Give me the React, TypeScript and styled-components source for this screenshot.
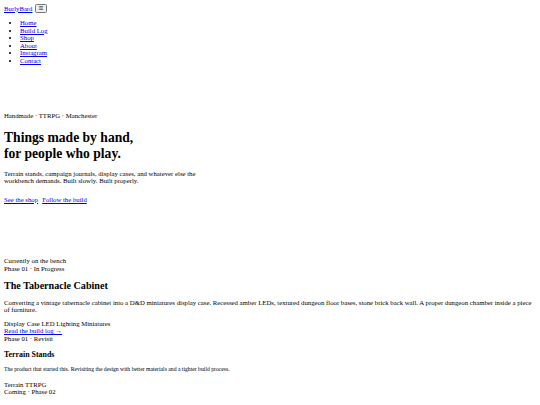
import React from "react";
import styled, { createGlobalStyle } from "styled-components";

const Global = createGlobalStyle`
  html, body { margin: 0; padding: 0; background: #fff; }
  body {
    padding: 4px 4px;
    font-family: "Liberation Serif", "Times New Roman", serif;
    font-size: 6.75px;
    line-height: 7.55px;
    color: #000;
  }
  a { color: #0000ee; }
`;

const Header = styled.header`
  display: block;
`;

const Bar = styled.div`
  display: flex;
  align-items: center;
  gap: 2px;
`;

const Logo = styled.a`
  font-size: 6.75px;
`;

const MenuButton = styled.button`
  font-family: "DejaVu Sans", sans-serif;
  font-size: 5.5px;
  line-height: 1;
  padding: 1px 3px;
  height: 9px;
  border: 1px solid #767676;
  border-radius: 1.5px;
  background: #efefef;
  color: #000;
`;

const NavList = styled.ul`
  margin: 6px 0 0;
  padding-left: 16px;
  list-style: disc;
`;

const Hero = styled.section`
  padding-top: 48px;
`;

const Eyebrow = styled.p`
  margin: 0 0 10px;
`;

const Title = styled.h1`
  font-size: 13.6px;
  line-height: 16px;
  margin: 0 0 8px;
  font-weight: bold;
`;

const Lead = styled.p`
  margin: 0 0 11px;
  max-width: 205px;
`;

const Links = styled.div`
  display: flex;
  gap: 4px;
`;

const Bench = styled.section`
  padding-top: 54px;
`;

const Line = styled.div``;

const H2 = styled.h2`
  font-size: 10.1px;
  line-height: 12px;
  margin: 7px 0 7px;
  font-weight: bold;
`;

const Para = styled.p<{ $small?: boolean }>`
  margin: 0 0 ${(p) => (p.$small ? 8 : 6)}px;
  font-size: ${(p) => (p.$small ? "5.7px" : "6.75px")};
  line-height: ${(p) => (p.$small ? "6.6px" : "7.55px")};
`;

const H3 = styled.h3`
  font-size: 7.9px;
  line-height: 9px;
  margin: 8px 0 7px;
  font-weight: bold;
`;

const Next = styled.div`
  margin-top: 9px;
`;

export default function App() {
  return (
    <>
      <Global />
      <Header>
        <Bar>
          <Logo href="#">BurlyBard</Logo>
          <MenuButton>☰</MenuButton>
        </Bar>
        <nav>
          <NavList>
            <li><a href="#">Home</a></li>
            <li><a href="#">Build Log</a></li>
            <li><a href="#">Shop</a></li>
            <li><a href="#">About</a></li>
            <li><a href="#">Instagram</a></li>
            <li><a href="#">Contact</a></li>
          </NavList>
        </nav>
      </Header>
      <Hero>
        <Eyebrow>Handmade · TTRPG · Manchester</Eyebrow>
        <Title>
          Things made by hand,
          <br />
          for people who play.
        </Title>
        <Lead>
          Terrain stands, campaign journals, display cases, and whatever else the
          workbench demands. Built slowly. Built properly.
        </Lead>
        <Links>
          <a href="#">See the shop</a>
          <a href="#">Follow the build</a>
        </Links>
      </Hero>
      <Bench>
        <Line>Currently on the bench</Line>
        <Line>Phase 01 · In Progress</Line>
        <H2>The Tabernacle Cabinet</H2>
        <Para>
          Converting a vintage tabernacle cabinet into a D&amp;D miniatures display
          case. Recessed amber LEDs, textured dungeon floor bases, stone brick back
          wall. A proper dungeon chamber inside a piece of furniture.
        </Para>
        <Line>Display Case LED Lighting Miniatures</Line>
        <Line><a href="#">Read the build log →</a></Line>
        <Line>Phase 01 · Revisit</Line>
        <H3>Terrain Stands</H3>
        <Para $small>
          The product that started this. Revisiting the design with better
          materials and a tighter build process.
        </Para>
        <Line>Terrain TTRPG</Line>
        <Line>Coming · Phase 02</Line>
        <Next>Campaign Journals · Coming</Next>
      </Bench>
    </>
  );
}
